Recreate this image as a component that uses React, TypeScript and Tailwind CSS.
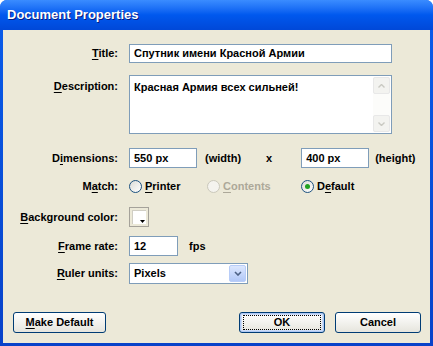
import React from "react";

const font = { fontFamily: '"Liberation Sans", Arial, sans-serif' };

function Label({ children, top = false }: { children: React.ReactNode; top?: boolean }) {
  return (
    <div className={`w-[115px] shrink-0 text-right ${top ? "self-start pt-[3px]" : ""}`}>{children}</div>
  );
}

function U({ children }: { children: React.ReactNode }) {
  return <span className="underline underline-offset-[2px]">{children}</span>;
}

function TextBox({ value, width }: { value: string; width: string }) {
  return (
    <div className={`${width} h-[20px] border border-[#7F9DB9] bg-white px-[4px] flex items-center`}>{value}</div>
  );
}

function Radio({ checked = false, disabled = false, children }: { checked?: boolean; disabled?: boolean; children: React.ReactNode }) {
  return (
    <div className={`flex items-center gap-[3px] ${disabled ? "text-[#ACA899]" : ""}`}>
      <div
        className={`w-[13px] h-[13px] rounded-full border flex items-center justify-center ${
          disabled ? "border-[#CAC8BB] bg-[#F4F3EE]" : "border-[#1C5180] bg-gradient-to-br from-[#DCDCD7] to-white"
        }`}
      >
        {checked && <div className="w-[5px] h-[5px] rounded-full bg-[#21A121]" />}
      </div>
      <span>{children}</span>
    </div>
  );
}

function Button({ children, width, isDefault = false }: { children: React.ReactNode; width: string; isDefault?: boolean }) {
  return (
    <div
      className={`${width} h-[21px] rounded-[3px] border border-[#003C74] bg-gradient-to-b from-white to-[#E6E5DD] flex items-center justify-center ${
        isDefault ? "shadow-[inset_0_0_0_1px_#AFC9F4,inset_0_0_0_2px_#CEDDF8]" : ""
      }`}
    >
      <div className={`px-[3px] ${isDefault ? "outline outline-1 outline-dotted outline-black w-[calc(100%-8px)] h-[13px] flex items-center justify-center" : ""}`}>
        {children}
      </div>
    </div>
  );
}

export default function App() {
  return (
    <div className="w-[433px] h-[346px] flex flex-col rounded-t-[7px] bg-gradient-to-b from-[#0A5DEB] to-[#0842C9] overflow-hidden" style={font}>
      {/* Title bar */}
      <div className="h-[30px] shrink-0 flex items-center pl-[7px] bg-gradient-to-b from-[#3A8CFF] via-[#0058EE] to-[#0048D8]">
        <span className="text-white font-bold text-[13px] [text-shadow:1px_1px_0_#0A1A80]">Document Properties</span>
      </div>

      {/* Body */}
      <div className="flex-1 mx-[3px] mb-[3px] bg-[#ECE9D8] text-[11px] font-bold text-black flex flex-col pt-[14px]">
        <div className="flex items-center">
          <Label><U>T</U>itle:</Label>
          <div className="ml-[11px] w-[263px] h-[19px] border border-[#7F9DB9] bg-white px-[4px] flex items-center">
            Спутник имени Красной Армии
          </div>
        </div>

        <div className="flex items-center mt-[12px]">
          <Label top><U>D</U>escription:</Label>
          <div className="ml-[11px] w-[263px] h-[59px] border border-[#7F9DB9] bg-white flex">
            <div className="flex-1 px-[4px] pt-[3px]">Красная Армия всех сильней!</div>
            <div className="w-[17px] flex flex-col justify-between bg-[#FCFCFA] mr-[1px] my-[1px]">
              <div className="h-[17px] rounded-[2px] border border-[#E8E8E8] bg-[#F3F3F0] flex items-center justify-center">
                <svg width="7" height="4" viewBox="0 0 7 4"><path d="M0.5 3.5 L3.5 0.5 L6.5 3.5" fill="none" stroke="#C9C9C2" strokeWidth="1.4" /></svg>
              </div>
              <div className="h-[17px] rounded-[2px] border border-[#E8E8E8] bg-[#F3F3F0] flex items-center justify-center">
                <svg width="7" height="4" viewBox="0 0 7 4"><path d="M0.5 0.5 L3.5 3.5 L6.5 0.5" fill="none" stroke="#C9C9C2" strokeWidth="1.4" /></svg>
              </div>
            </div>
          </div>
        </div>

        <div className="flex items-center mt-[14px]">
          <Label>D<U>i</U>mensions:</Label>
          <div className="ml-[11px]"><TextBox value="550 px" width="w-[68px]" /></div>
          <span className="ml-[8px]">(width)</span>
          <span className="ml-[25px]">x</span>
          <div className="ml-[29px]"><TextBox value="400 px" width="w-[68px]" /></div>
          <span className="ml-[6px]">(height)</span>
        </div>

        <div className="flex items-center mt-[10px] h-[17px]">
          <Label>M<U>a</U>tch:</Label>
          <div className="ml-[11px] w-[78px]"><Radio><U>P</U>rinter</Radio></div>
          <div className="w-[94px]"><Radio disabled><U>C</U>ontents</Radio></div>
          <Radio checked>D<U>e</U>fault</Radio>
        </div>

        <div className="flex items-center mt-[12px]">
          <Label><U>B</U>ackground color:</Label>
          <div className="ml-[11px] w-[20px] h-[20px] border border-[#A5A29A] bg-[#ECE9D8] p-[2px]">
            <div className="w-full h-full bg-white border-t border-l border-[#D0CEC4] flex items-end justify-end">
              <svg width="5" height="3" viewBox="0 0 5 3" className="mb-[1px] mr-[1px]"><path d="M0 0 H5 L2.5 3 Z" fill="#000" /></svg>
            </div>
          </div>
        </div>

        <div className="flex items-center mt-[9px]">
          <Label><U>F</U>rame rate:</Label>
          <div className="ml-[11px]"><TextBox value="12" width="w-[49px]" /></div>
          <span className="ml-[11px]">fps</span>
        </div>

        <div className="flex items-center mt-[7px]">
          <Label><U>R</U>uler units:</Label>
          <div className="ml-[11px] w-[119px] h-[21px] border border-[#7F9DB9] bg-white flex items-center p-[1px]">
            <span className="flex-1 pl-[3px]">Pixels</span>
            <div className="w-[17px] h-full rounded-[2px] border border-[#B8CDF8] bg-gradient-to-b from-[#DCE7FE] to-[#B2C8F7] flex items-center justify-center">
              <svg width="8" height="5" viewBox="0 0 8 5"><path d="M1 1 L4 4 L7 1" fill="none" stroke="#4D6185" strokeWidth="1.6" /></svg>
            </div>
          </div>
        </div>

        <div className="flex-1" />

        <div className="flex items-center pl-[10px] pr-[9px] mb-[10px]">
          <Button width="w-[93px]"><U>M</U>ake Default</Button>
          <div className="flex-1" />
          <Button width="w-[86px]" isDefault>OK</Button>
          <div className="ml-[10px]"><Button width="w-[86px]">Cancel</Button></div>
        </div>
      </div>
    </div>
  );
}
